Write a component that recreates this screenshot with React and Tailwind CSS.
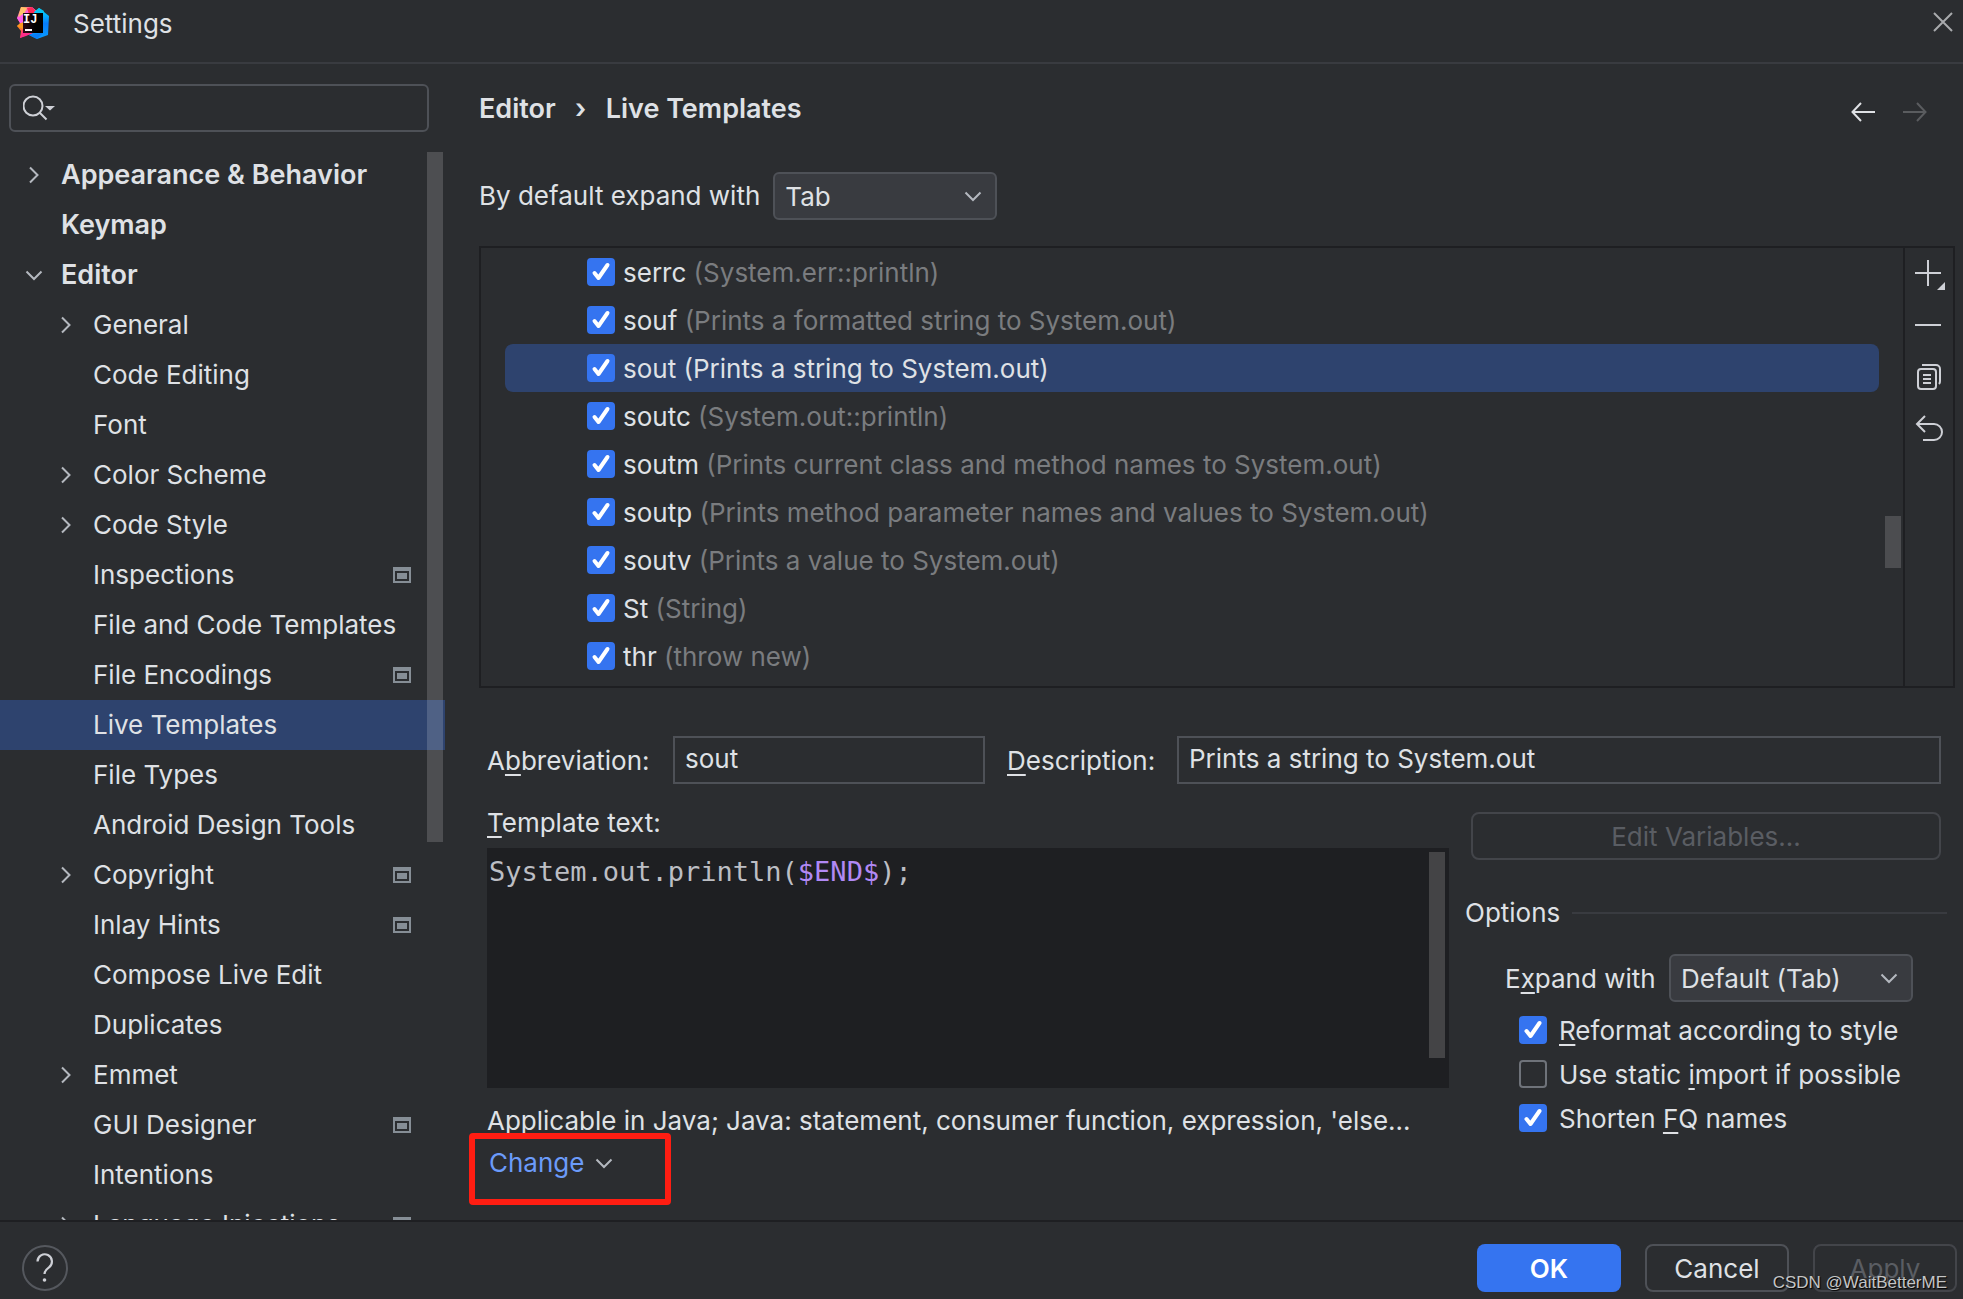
import React, { useState } from 'react';

const treeItems = [
  { label: 'Appearance & Behavior', level: 0, arrow: 'right' },
  { label: 'Keymap', level: 0 },
  { label: 'Editor', level: 0, arrow: 'down' },
  { label: 'General', level: 1, arrow: 'right' },
  { label: 'Code Editing', level: 1 },
  { label: 'Font', level: 1 },
  { label: 'Color Scheme', level: 1, arrow: 'right' },
  { label: 'Code Style', level: 1, arrow: 'right' },
  { label: 'Inspections', level: 1, project: true },
  { label: 'File and Code Templates', level: 1 },
  { label: 'File Encodings', level: 1, project: true },
  { label: 'Live Templates', level: 1 },
  { label: 'File Types', level: 1 },
  { label: 'Android Design Tools', level: 1 },
  { label: 'Copyright', level: 1, arrow: 'right', project: true },
  { label: 'Inlay Hints', level: 1, project: true },
  { label: 'Compose Live Edit', level: 1 },
  { label: 'Duplicates', level: 1 },
  { label: 'Emmet', level: 1, arrow: 'right' },
  { label: 'GUI Designer', level: 1, project: true },
  { label: 'Intentions', level: 1 },
  { label: 'Language Injections', level: 1, arrow: 'right', project: true }
];

const initialTemplates = [
  { name: 'serrc', description: 'System.err::println' },
  { name: 'souf', description: 'Prints a formatted string to System.out' },
  { name: 'sout', description: 'Prints a string to System.out' },
  { name: 'soutc', description: 'System.out::println' },
  { name: 'soutm', description: 'Prints current class and method names to System.out' },
  { name: 'soutp', description: 'Prints method parameter names and values to System.out' },
  { name: 'soutv', description: 'Prints a value to System.out' },
  { name: 'St', description: 'String' },
  { name: 'thr', description: 'throw new' }
];

const Chevron = ({ direction = 'down', className = '' }) => (
  <svg className={className} width="20" height="20" viewBox="0 0 20 20" fill="none" stroke="#b4b8bf" strokeWidth="2" aria-hidden="true">
    {direction === 'down' ? <path d="M2.5 6.5 10 14l7.5-7.5" /> : <path d="M6 2.5 13.500 10 6 17.500" />}
  </svg>
);

const Logo = () => (
  <svg width="32" height="32" viewBox="0 0 32 32" aria-hidden="true">
    <defs>
      <linearGradient id="logoLeft" x1="0" y1="0" x2="0.400" y2="1">
        <stop offset="0" stopColor="#fdb60d" />
        <stop offset="0.300" stopColor="#ff59e1" />
        <stop offset="0.550" stopColor="#ff8a1c" />
        <stop offset="1" stopColor="#ff2d78" />
      </linearGradient>
      <linearGradient id="logoRight" x1="0" y1="0" x2="0" y2="1">
        <stop offset="0" stopColor="#00e4ff" />
        <stop offset="0.500" stopColor="#087cfa" />
        <stop offset="1" stopColor="#079cff" />
      </linearGradient>
      <linearGradient id="logoTile" x1="0" y1="0" x2="1" y2="0">
        <stop offset="0" stopColor="#2e0a14" />
        <stop offset="0.600" stopColor="#000000" />
      </linearGradient>
    </defs>
    <path d="M4 0 15 0 22 6 20 26 10 28 3 31 4 24 0 19 3 16 0 11Z" fill="url(#logoLeft)" />
    <path d="M4 0 10 1 6 9 1 11Z" fill="#ffc46b" />
    <path d="M10 1 15 0 21 7 12 7Z" fill="#fe2857" />
    <path d="M0 11 6 7 6 16 3 16Z" fill="#ff5de8" />
    <path d="M0 19 6 15 6 22Z" fill="#ff9a1f" />
    <path d="M3 31 6 22 16 26 9 29Z" fill="#fe2d8a" />
    <path d="M17 5 22 1 32 9 31 28 20 32 12 28 20 24Z" fill="url(#logoRight)" />
    <path d="M22 1 27 4 26 7 18 6Z" fill="#07c3f2" />
    <path d="M12 28 26 26 20 32Z" fill="#0a7df5" />
    <path d="M6 6h20v20H6z" fill="url(#logoTile)" />
    <text x="6" y="16" fill="#fff" fontSize="12" fontWeight="700" fontFamily="Liberation Mono, monospace">IJ</text>
    <path d="M8 22h7v2H8z" fill="#fff" />
  </svg>
);

// marks settings stored in the current project
const ProjectIcon = () => (
  <svg width="18" height="16" viewBox="0 0 18 16" aria-hidden="true">
    <path fillRule="evenodd" d="M0 0h18v16H0zM2 4v10h14V4z" fill="#868e96" />
    <path d="M4 6h10v6H4z" fill="#868e96" />
  </svg>
);

const CheckBox = ({ id, checked, onChange }) => (
  <span className="grid h-7 w-7 shrink-0">
    <input
      id={id}
      type="checkbox"
      checked={checked}
      onChange={onChange}
      className="peer col-start-1 row-start-1 h-7 w-7 appearance-none rounded border-2 border-[#6f737a] checked:border-[#3574f0] checked:bg-[#3574f0]"
    />
    <svg
      className="pointer-events-none invisible col-start-1 row-start-1 peer-checked:visible"
      width="28" height="28" viewBox="0 0 28 28" fill="none" stroke="#fff" strokeWidth="4" strokeLinecap="round" strokeLinejoin="round" aria-hidden="true"
    >
      <path d="M7.500 15 11.500 20 20.500 7" />
    </svg>
  </span>
);

const Combo = ({ id, options, className }) => (
  <span className={`grid items-center ${className}`}>
    <select
      id={id}
      className="col-start-1 row-start-1 h-12 w-full appearance-none rounded-md border-2 border-[#4e5157] bg-[#393b40] pl-2.5 pr-10 pt-0.5 text-[#dfe1e5]"
    >
      {options.map((option) => (
        <option key={option}>{option}</option>
      ))}
    </select>
    <Chevron className="pointer-events-none col-start-1 row-start-1 mr-3.5 justify-self-end" />
  </span>
);

// underlined mnemonic letter
const Key = ({ children }) => (
  <span className="underline decoration-2 underline-offset-4 [text-decoration-skip-ink:none]">{children}</span>
);

const Sidebar = ({ selected, onSelect }) => (
  <aside className="relative flex w-[445px] shrink-0 flex-col pt-5">
    <div className="ml-[9px] mr-4 flex h-12 items-center rounded-md border-2 border-[#4e5157] pl-3">
      <svg width="34" height="26" viewBox="0 0 34 26" fill="none" stroke="#ced0d6" strokeWidth="2" aria-hidden="true">
        <circle cx="10" cy="11" r="9.500" />
        <path d="m16.500 17.500 7 7" />
        <path d="M22 11h10L27 15.500Z" fill="#ced0d6" stroke="none" />
      </svg>
      <input type="text" aria-label="Search settings" className="h-full min-w-0 flex-1 bg-transparent px-1 outline-none" />
    </div>

    <ul className="mt-[18px] min-h-0 flex-1 overflow-hidden">
      {treeItems.map((item) => (
        <li key={item.label} className={item.label === selected ? 'bg-[#2e436e]' : ''}>
          <button
            type="button"
            onClick={() => onSelect(item.label)}
            className={`flex h-[50px] w-full items-center pr-[34px] text-left ${item.level === 0 ? 'pl-6 text-[27px] font-semibold' : 'pl-14'}`}
          >
            <span className="w-[37px] shrink-0">
              {item.arrow && <Chevron direction={item.arrow} />}
            </span>
            <span className="flex-1 whitespace-nowrap">{item.label}</span>
            {item.project && <ProjectIcon />}
          </button>
        </li>
      ))}
    </ul>
    <div className="absolute right-0.5 top-[88px] h-[690px] w-4 bg-white/16" />
  </aside>
);

const TemplateList = () => {
  const [selected, setSelected] = useState('sout');
  const [disabled, setDisabled] = useState([]);

  const toggle = (name) => {
    setDisabled(disabled.includes(name) ? disabled.filter((n) => n !== name) : [...disabled, name]);
  };

  return (
    <div className="mt-[26px] flex h-[442px] border-2 border-[#1e1f22]">
      <div className="relative min-w-0 flex-1">
        <ul className="ml-6 mr-6">
          {initialTemplates.map((item) => {
            const isSelected = item.name === selected;
            return (
              <li
                key={item.name}
                onClick={() => setSelected(item.name)}
                className={`flex h-12 items-center gap-2 rounded-lg pl-[82px] ${isSelected ? 'bg-[#2e436e]' : ''}`}
              >
                <CheckBox id={`tpl-${item.name}`} checked={!disabled.includes(item.name)} onChange={() => toggle(item.name)} />
                <label htmlFor={`tpl-${item.name}`} className="pt-0.5">
                  {item.name} <span className={isSelected ? '' : 'text-[#7a7c7f]'}>({item.description})</span>
                </label>
              </li>
            );
          })}
        </ul>
        <div className="absolute right-0.5 top-[268px] h-[52px] w-4 bg-[#4c4d50]" />
      </div>

      <div className="flex w-[50px] flex-col items-center gap-5 border-l-2 border-[#1e1f22] pt-2">
        <button type="button" aria-label="Add" className="h-8 w-8">
          <svg className="overflow-visible" width="32" height="32" viewBox="0 0 32 32" aria-hidden="true">
            <path d="M2 17h26M15 4v26" stroke="#ced0d6" strokeWidth="2" />
            <path d="M32 26v8h-8z" fill="#ced0d6" />
          </svg>
        </button>
        <button type="button" aria-label="Remove" className="h-8 w-8">
          <svg width="32" height="32" viewBox="0 0 32 32" aria-hidden="true">
            <path d="M2 17h26" stroke="#ced0d6" strokeWidth="2" />
          </svg>
        </button>
        <button type="button" aria-label="Duplicate" className="h-8 w-8">
          <svg width="32" height="32" viewBox="0 0 32 32" fill="none" stroke="#ced0d6" strokeWidth="2" aria-hidden="true">
            <rect x="5" y="9" width="18" height="20" rx="3" />
            <path d="M9 5h14a4 4 0 0 1 4 4v12a4 4 0 0 1-1 3M10 15h8M10 19h8M10 23h8" />
          </svg>
        </button>
        <button type="button" aria-label="Restore defaults" className="h-8 w-8">
          <svg width="32" height="32" viewBox="0 0 32 32" fill="none" stroke="#ced0d6" strokeWidth="2" aria-hidden="true">
            <path d="M12 4 4 12l8 8M4 12h17a8 8 0 0 1 0 16H10" />
          </svg>
        </button>
      </div>
    </div>
  );
};

const TemplateEditor = () => {
  const [text, setText] = useState('System.out.println($END$);');
  const parts = text.split(/(\$\w+\$)/);

  return (
    <div className="relative mt-[9px] h-60 bg-[#1e1f22] font-['DejaVu_Sans_Mono',monospace] text-[27px] leading-10">
      {/* coloured text is drawn under the transparent textarea */}
      <pre aria-hidden="true" className="px-0.5 py-1 font-[inherit] text-[27px] text-[#bcbec4]">
        {parts.map((part, i) =>
          /^\$\w+\$$/.test(part) ? <span key={i} className="text-[#b189f5]">{part}</span> : part
        )}
      </pre>
      <textarea
        id="template-text"
        value={text}
        onChange={(e) => setText(e.target.value)}
        spellCheck={false}
        className="absolute inset-0 h-full w-full resize-none bg-transparent px-0.5 py-1 text-transparent caret-[#ced0d6] outline-none"
      />
      <div className="absolute right-1 top-1 h-[206px] w-4 bg-[#444446]" />
    </div>
  );
};

const OptionsPanel = () => {
  const [options, setOptions] = useState({ reformat: true, staticImport: false, shorten: true });

  const handleChange = (name) => {
    setOptions({ ...options, [name]: !options[name] });
  };

  return (
    <div className="w-[482px] shrink-0 pt-7">
      <div className="pl-1.5 pr-1.5">
        <button type="button" disabled className="h-12 w-full rounded-lg border-2 border-[#43454a] pt-0.5 text-[#5a5d63]">
          Edit Variables...
        </button>
      </div>

      <h2 className="mt-[37px] flex items-center gap-3">
        Options
        <span className="h-0.5 flex-1 bg-[#393b40]" />
      </h2>

      <div className="mt-[25px] flex items-center justify-between pl-10 pr-[34px]">
        <label htmlFor="expand-with" className="pt-0.5">E<Key>x</Key>pand with</label>
        <Combo id="expand-with" className="w-[244px]" options={['Default (Tab)', 'Tab', 'Enter', 'Space']} />
      </div>

      <div className="mt-1.5 pl-[54px]">
        <div className="flex h-11 items-center gap-3">
          <CheckBox id="reformat" checked={options.reformat} onChange={() => handleChange('reformat')} />
          <label htmlFor="reformat" className="pt-0.5"><Key>R</Key>eformat according to style</label>
        </div>
        <div className="flex h-11 items-center gap-3">
          <CheckBox id="static-import" checked={options.staticImport} onChange={() => handleChange('staticImport')} />
          <label htmlFor="static-import" className="pt-0.5">Use static <Key>i</Key>mport if possible</label>
        </div>
        <div className="flex h-11 items-center gap-3">
          <CheckBox id="shorten" checked={options.shorten} onChange={() => handleChange('shorten')} />
          <label htmlFor="shorten" className="pt-0.5">Shorten <Key>F</Key>Q names</label>
        </div>
      </div>
    </div>
  );
};

const App = () => {
  const [page, setPage] = useState('Live Templates');

  return (
    <div className="flex h-screen flex-col overflow-hidden bg-[#2b2d30] font-[Inter,sans-serif] text-[26px] leading-8 text-[#dfe1e5]">
      <header className="flex h-16 shrink-0 items-start justify-between border-b-2 border-[#393b40] pl-[17px] pr-2.5 pt-1.5">
        <div className="flex items-center gap-6">
          <Logo />
          <h1 className="pt-0.5">Settings</h1>
        </div>
        <button type="button" aria-label="Close">
          <svg width="20" height="32" viewBox="0 0 20 32" stroke="#a8aaad" strokeWidth="2" aria-hidden="true">
            <path d="M1 7l18 18M19 7L1 25" />
          </svg>
        </button>
      </header>

      <div className="flex min-h-0 flex-1">
        <Sidebar selected={page} onSelect={setPage} />

        <main className="min-w-0 flex-1 pl-[34px] pr-2 pt-[29px]">
          <div className="flex items-center justify-between pr-7">
            <nav className="flex items-center gap-4 text-[27px] font-semibold" aria-label="Breadcrumb">
              <a href="#editor">Editor</a>
              <span className="w-[18px] text-center">›</span>
              <a href="#live-templates">Live Templates</a>
            </nav>
            <div className="flex gap-7 pt-1.5">
              <button type="button" aria-label="Back">
                <svg width="24" height="24" viewBox="0 0 24 24" fill="none" stroke="#dfe1e5" strokeWidth="2" aria-hidden="true">
                  <path d="M24 12H1.500M10 3 1.500 12 10 21" />
                </svg>
              </button>
              <button type="button" aria-label="Forward" disabled>
                <svg width="24" height="24" viewBox="0 0 24 24" fill="none" stroke="#5a5c5f" strokeWidth="2" aria-hidden="true">
                  <path d="M0 12h22.500M14 3l8.500 9L14 21" />
                </svg>
              </button>
            </div>
          </div>

          <div className="mt-[47px] flex items-center gap-[13px]">
            <label htmlFor="default-expand">By default expand with</label>
            <Combo id="default-expand" className="w-56" options={['Tab', 'Enter', 'Space']} />
          </div>

          <TemplateList />

          <div className="px-2">
            <div className="mt-12 flex items-center pr-1.5">
              <label htmlFor="abbreviation" className="w-[186px] shrink-0 pt-0.5">A<Key>b</Key>breviation:</label>
              <input id="abbreviation" type="text" defaultValue="sout" className="h-12 w-[312px] border-2 border-[#4e5157] bg-transparent px-2.5 pb-[3px]" />
              <label htmlFor="description" className="ml-[22px] w-[170px] shrink-0 pt-0.5"><Key>D</Key>escription:</label>
              <input id="description" type="text" defaultValue="Prints a string to System.out" className="h-12 min-w-0 flex-1 border-2 border-[#4e5157] bg-transparent px-2.5 pb-[3px]" />
            </div>

            <div className="flex gap-4">
              <div className="min-w-0 flex-1 pt-[23px]">
                <label htmlFor="template-text" className="block"><Key>T</Key>emplate text:</label>
                <TemplateEditor />
                <p className="mt-[17px] whitespace-nowrap">
                  Applicable in Java; Java: statement, consumer function, expression, 'else...
                </p>
                <div className="relative mt-2.5 flex">
                  <button type="button" className="flex items-center gap-2.5 pl-0.5 text-[#6b9bfa]">
                    Change
                    <Chevron />
                  </button>
                  <div className="pointer-events-none absolute -left-[18px] -top-3.5 h-[72px] w-[202px] rounded border-6 border-[#ff1d12]" />
                </div>
              </div>
              <OptionsPanel />
            </div>
          </div>
        </main>
      </div>

      <footer className="relative flex h-[79px] shrink-0 items-start justify-between border-t-2 border-[#1e1f22] pl-[22px] pr-1.5 pt-[22px]">
        <button type="button" aria-label="Help" className="rounded-full pt-px">
          <svg width="46" height="46" viewBox="0 0 46 46" fill="none" aria-hidden="true">
            <circle cx="23" cy="23" r="22" stroke="#55585e" strokeWidth="2" />
            <path d="M15.500 16.500a7.200 7.200 0 1 1 11.500 5.800c-2.700 2-4.500 3.200-4.500 6.700" stroke="#ced0d6" strokeWidth="2.200" />
            <circle cx="22.500" cy="35" r="1.800" fill="#ced0d6" />
          </svg>
        </button>
        <div className="flex gap-6">
          <button type="button" className="h-12 w-36 rounded-lg bg-[#3574f0] pt-0.5 font-semibold text-white">OK</button>
          <button type="button" className="h-12 w-36 rounded-lg border-2 border-[#4e5157] pt-0.5">Cancel</button>
          <button type="button" disabled className="h-12 w-36 rounded-lg border-2 border-[#43454a] pt-0.5 text-[#5a5d63]">Apply</button>
        </div>
        <span className="absolute bottom-1 right-4 font-['Liberation_Sans',sans-serif] text-[17px] leading-6 text-[#c4c5c6] [text-shadow:1px_1px_1px_#000]">
          CSDN @WaitBetterME
        </span>
      </footer>
    </div>
  );
};

export default App;
